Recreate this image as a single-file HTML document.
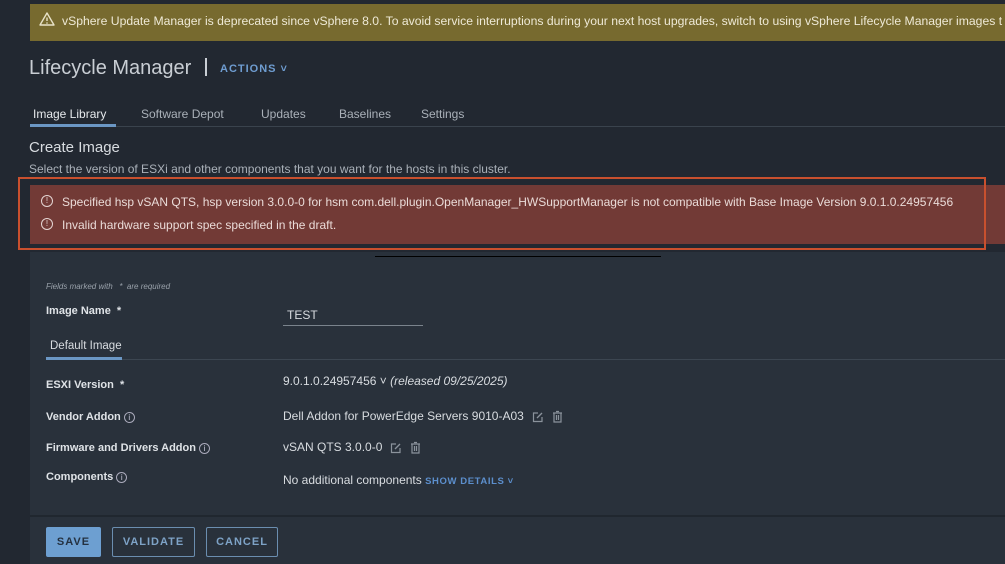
<!DOCTYPE html>
<html><head><style>
*{margin:0;padding:0;box-sizing:border-box}
body{width:1005px;height:564px;overflow:hidden;background:#222831;font-family:"Liberation Sans",sans-serif;position:relative;color:#d8dce0}
.a{position:absolute;white-space:nowrap}
.lbl{font-size:11px;font-weight:bold;color:#dfe3e7}
.val{font-size:12px;color:#d8dce0}
.ic{display:inline-block;width:11px;height:11px;border:1px solid #aab;border-radius:50%;font-size:8px;text-align:center;line-height:9px;color:#ccd;vertical-align:middle;margin-left:3px;font-weight:normal}
.btn{position:absolute;top:527px;height:30px;border:1px solid #6b8eb0;color:#7ea3c7;font-size:11px;font-weight:bold;letter-spacing:1px;text-align:center;line-height:28px;border-radius:2px}
svg.i{vertical-align:middle;margin-left:8px}
</style></head><body>
<div class="a" style="left:30px;top:4px;width:975px;height:37px;background:#776a2f"></div>
<svg class="a" style="left:39px;top:11px" width="16" height="16" viewBox="0 0 16 16"><path d="M8 2 L15 14 H1 Z" fill="none" stroke="#e8e2c8" stroke-width="1.4" stroke-linejoin="round"/><path d="M8 6.5V10" stroke="#e8e2c8" stroke-width="1.4"/><circle cx="8" cy="12" r=".8" fill="#e8e2c8"/></svg>
<div class="a" style="left:62px;top:14px;font-size:12.2px;color:#eee9d6">vSphere Update Manager is deprecated since vSphere 8.0. To avoid service interruptions during your next host upgrades, switch to using vSphere Lifecycle Manager images t</div>
<div class="a" style="left:29px;top:57px;font-size:20px;color:#c9ced4">Lifecycle Manager</div>
<div class="a" style="left:205px;top:58px;width:2px;height:18px;background:#c9ced4"></div>
<div class="a" style="left:220px;top:63px;font-size:11px;font-weight:bold;letter-spacing:1px;color:#6f9dd1">ACTIONS ˅</div>
<div class="a" style="left:30px;top:126px;width:975px;height:1px;background:#3a434d"></div>
<div class="a" style="left:30px;top:124px;width:86px;height:3px;background:#6b97c4"></div>
<div class="a" style="left:33px;top:107px;font-size:12px;color:#e6e9ec">Image Library</div>
<div class="a" style="left:141px;top:107px;font-size:12px;color:#aab1b9">Software Depot</div>
<div class="a" style="left:261px;top:107px;font-size:12px;color:#aab1b9">Updates</div>
<div class="a" style="left:339px;top:107px;font-size:12px;color:#aab1b9">Baselines</div>
<div class="a" style="left:421px;top:107px;font-size:12px;color:#aab1b9">Settings</div>
<div class="a" style="left:29px;top:139px;font-size:15px;color:#d8dce0">Create Image</div>
<div class="a" style="left:29px;top:162px;font-size:12px;color:#aab1b9">Select the version of ESXi and other components that you want for the hosts in this cluster.</div>
<div class="a" style="left:30px;top:185px;width:975px;height:59px;background:#723a36"></div>
<div class="a" style="left:18px;top:177px;width:968px;height:73px;border:2px solid #c9502e"></div>
<div class="a" style="left:41px;top:195px;width:12px;height:12px;border:1.3px solid #e4d5d3;border-radius:50%;font-size:8px;text-align:center;line-height:10px;color:#e4d5d3">!</div>
<div class="a" style="left:41px;top:218px;width:12px;height:12px;border:1.3px solid #e4d5d3;border-radius:50%;font-size:8px;text-align:center;line-height:10px;color:#e4d5d3">!</div>
<div class="a" style="left:62px;top:195px;font-size:12px;color:#eadbd8">Specified hsp vSAN QTS, hsp version 3.0.0-0 for hsm com.dell.plugin.OpenManager_HWSupportManager is not compatible with Base Image Version 9.0.1.0.24957456</div>
<div class="a" style="left:62px;top:218px;font-size:12px;color:#eadbd8">Invalid hardware support spec specified in the draft.</div>
<div class="a" style="left:30px;top:252px;width:975px;height:312px;background:#29313b"></div>
<div class="a" style="left:375px;top:256px;width:286px;height:1px;background:#000"></div>
<div class="a" style="left:46px;top:282px;font-size:8px;font-style:italic;color:#9aa2ab">Fields marked with &nbsp; * &nbsp;are required</div>
<div class="a lbl" style="left:46px;top:305px">Image Name &nbsp;*</div>
<div class="a val" style="left:287px;top:308px">TEST</div>
<div class="a" style="left:283px;top:325px;width:140px;height:1px;background:#7a838c"></div>
<div class="a" style="left:50px;top:340px;font-size:11.5px;color:#d8dce0">Default Image</div>
<div class="a" style="left:46px;top:359px;width:959px;height:1px;background:#3c4651"></div>
<div class="a" style="left:46px;top:357px;width:76px;height:3px;background:#6b97c4"></div>
<div class="a lbl" style="left:46px;top:379px">ESXI Version &nbsp;*</div>
<div class="a val" style="left:283px;top:374px">9.0.1.0.24957456 ˅ <i>(released 09/25/2025)</i></div>
<div class="a lbl" style="left:46px;top:411px">Vendor Addon<span class="ic">i</span></div>
<div class="a val" style="left:283px;top:409px">Dell Addon for PowerEdge Servers 9010-A03<svg class="i" width="12" height="12" viewBox="0 0 12 12"><path d="M6 2H1.5v8.5H10V6" fill="none" stroke="#8b939c" stroke-width="1.2"/><path d="M5 7l5-5" stroke="#8b939c" stroke-width="1.3"/></svg><svg class="i" width="11" height="13" viewBox="0 0 11 13"><path d="M1 3h9M4 1.5h3M2 3v9h7V3M4.5 5v5M6.5 5v5" fill="none" stroke="#8b939c" stroke-width="1.2"/></svg></div>
<div class="a lbl" style="left:46px;top:442px">Firmware and Drivers Addon<span class="ic">i</span></div>
<div class="a val" style="left:283px;top:440px">vSAN QTS 3.0.0-0<svg class="i" width="12" height="12" viewBox="0 0 12 12"><path d="M6 2H1.5v8.5H10V6" fill="none" stroke="#8b939c" stroke-width="1.2"/><path d="M5 7l5-5" stroke="#8b939c" stroke-width="1.3"/></svg><svg class="i" width="11" height="13" viewBox="0 0 11 13"><path d="M1 3h9M4 1.5h3M2 3v9h7V3M4.5 5v5M6.5 5v5" fill="none" stroke="#8b939c" stroke-width="1.2"/></svg></div>
<div class="a lbl" style="left:46px;top:471px">Components<span class="ic">i</span></div>
<div class="a val" style="left:283px;top:473px">No additional components <span style="font-size:9.5px;font-weight:bold;letter-spacing:.6px;color:#5c8fcd">SHOW DETAILS ˅</span></div>
<div class="a" style="left:30px;top:515px;width:975px;height:2px;background:#20272f"></div>
<div class="btn" style="left:46px;width:55px;background:#6d9fd1;border-color:#6d9fd1;color:#243140">SAVE</div>
<div class="btn" style="left:112px;width:83px">VALIDATE</div>
<div class="btn" style="left:206px;width:72px">CANCEL</div>
</body></html>
